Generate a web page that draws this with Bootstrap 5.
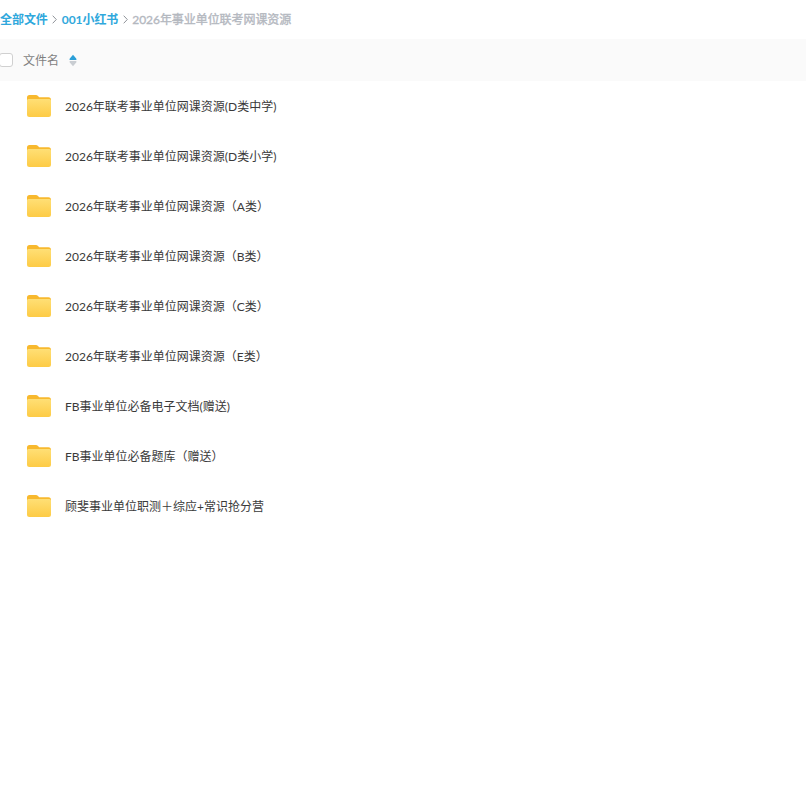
<!DOCTYPE html>
<html lang="zh">
<head>
<meta charset="utf-8">
<link href="https://cdn.jsdelivr.net/npm/bootstrap@5.3.0/dist/css/bootstrap.min.css" rel="stylesheet">
<style>
body{font-family:Lato,"Noto Sans CJK SC","Noto Sans",sans-serif;background:#fff;overflow:hidden;height:806px}
.crumbs{height:39px;font-size:12px;font-weight:700;color:#b4b8bf;letter-spacing:-.06px}
.crumbs a{color:#30a8dc;text-decoration:none}
.crumbs span,.crumbs a{padding-top:1px}
.sep{width:5px;height:9px;margin:0 4.500px}
.crumb-last{font-weight:400;-webkit-text-stroke:.35px #b4b8bf}
.headbar{height:42px;background:#fafafa;font-size:12px;color:#7f7f7f}
.headbar span:not(.chk){padding-top:2px}
.chk{width:14px;height:14px;border:1px solid #d0d0d0;border-radius:3px;margin-left:-1px;margin-right:10px;background:#fff}
.sorter{margin-left:10px;width:8px;height:13px}
.frow{height:50px;padding-left:27px;font-size:12px;color:#3a3a3a}
.frow span{padding-top:2px}
.frow svg{width:24px;height:22px;margin-right:14px;flex:none}
</style>
</head>
<body>
<div class="crumbs d-flex align-items-center">
<a href="#">全部文件</a>
<svg class="sep" viewBox="0 0 5 9"><path d="M.7.7 4.300 4.500.7 8.300" fill="none" stroke="#8f9399"/></svg>
<a href="#">001小红书</a>
<svg class="sep" viewBox="0 0 5 9"><path d="M.7.7 4.300 4.500.7 8.300" fill="none" stroke="#8f9399"/></svg>
<span class="crumb-last">2026年事业单位联考网课资源</span>
</div>
<div class="headbar d-flex align-items-center">
<span class="chk"></span><span>文件名</span>
<svg class="sorter" viewBox="0 0 8 13"><path d="M4 .8 7.200 4.400C7.900 5.300 7.400 6 6.500 6h-5C.6 6 .1 5.300.8 4.400Z" fill="#2b9fd8"/><path d="M4 12.200 .8 8.600C.1 7.700.6 7 1.500 7h5c.9 0 1.400.7.7 1.600Z" fill="#c9cdd2"/></svg>
</div>
<svg width="0" height="0" class="position-absolute"><defs>
<linearGradient id="fg" x1="0" y1="0" x2="0" y2="1"><stop offset="0" stop-color="#ffdf75"/><stop offset="1" stop-color="#fdcb45"/></linearGradient>
<symbol id="folder" viewBox="0 0 24 22">
<path d="M0 2.500A2.500 2.500 0 0 1 2.500 0h6.300c1 0 1.600.4 2.200 1l1.200 1.200H21.500A2.500 2.500 0 0 1 24 4.700V10H0Z" fill="#f8b92e"/>
<path d="M0 5.500A1.500 1.500 0 0 1 1.500 4H22.500A1.500 1.500 0 0 1 24 5.500V19.500A2.500 2.500 0 0 1 21.500 22H2.500A2.500 2.500 0 0 1 0 19.500Z" fill="url(#fg)"/>
</symbol>
</defs></svg>
<div class="d-flex align-items-center frow"><svg><use href="#folder"/></svg><span>2026年联考事业单位网课资源(D类中学)</span></div>
<div class="d-flex align-items-center frow"><svg><use href="#folder"/></svg><span>2026年联考事业单位网课资源(D类小学)</span></div>
<div class="d-flex align-items-center frow"><svg><use href="#folder"/></svg><span>2026年联考事业单位网课资源（A类）</span></div>
<div class="d-flex align-items-center frow"><svg><use href="#folder"/></svg><span>2026年联考事业单位网课资源（B类）</span></div>
<div class="d-flex align-items-center frow"><svg><use href="#folder"/></svg><span>2026年联考事业单位网课资源（C类）</span></div>
<div class="d-flex align-items-center frow"><svg><use href="#folder"/></svg><span>2026年联考事业单位网课资源（E类）</span></div>
<div class="d-flex align-items-center frow"><svg><use href="#folder"/></svg><span>FB事业单位必备电子文档(赠送)</span></div>
<div class="d-flex align-items-center frow"><svg><use href="#folder"/></svg><span>FB事业单位必备题库（赠送）</span></div>
<div class="d-flex align-items-center frow"><svg><use href="#folder"/></svg><span>顾斐事业单位职测＋综应+常识抢分营</span></div>
<script src="https://cdn.jsdelivr.net/npm/bootstrap@5.3.0/dist/js/bootstrap.bundle.min.js"></script>
</body>
</html>
